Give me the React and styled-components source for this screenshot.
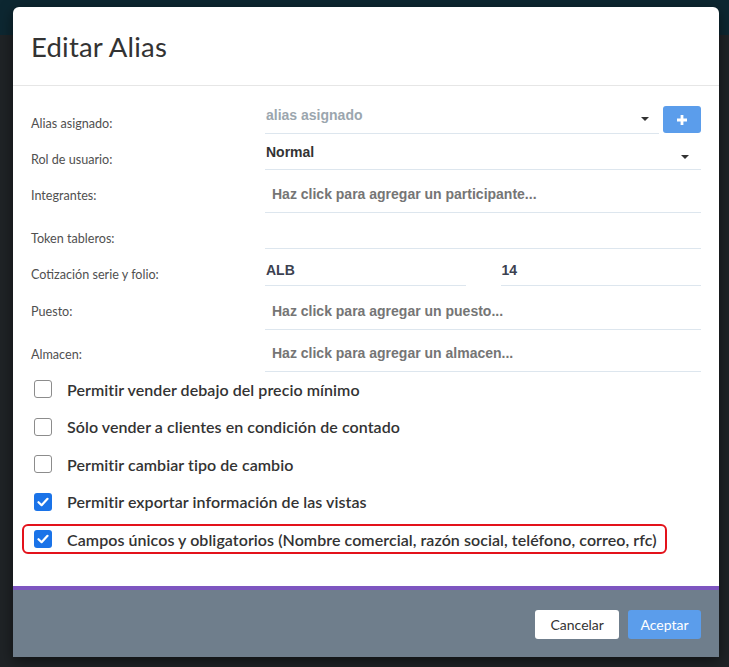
import React from "react";
import styled, { createGlobalStyle } from "styled-components";

const GlobalStyle = createGlobalStyle`
  html, body {
    margin: 0;
    padding: 0;
  }
  body {
    background: #1f2326;
  }
`;

const Page = styled.div`
  min-height: 667px;
  padding: 7px 0 0 13px;
  box-sizing: border-box;
  background: linear-gradient(#0d2731 0, #0d2731 35px, #1f2326 35px);
`;

const Modal = styled.div`
  width: 706px;
  background: #fff;
  border-radius: 6px 6px 0 0;
  box-shadow: 0 4px 14px rgba(0, 0, 0, 0.5);
  overflow: hidden;
`;

const Header = styled.div`
  height: 78px;
  display: flex;
  align-items: center;
  padding-left: 18px;
  border-bottom: 1px solid #e6e6e6;
`;

const Title = styled.h1`
  margin: 0;
  font-family: Lato, "Noto Sans", sans-serif;
  font-weight: 400;
  font-size: 27.5px;
  color: #333;
  letter-spacing: 0.2px;
`;

const Body = styled.div`
  padding: 20px 18px 32px 18px;
`;

const Row = styled.div`
  display: grid;
  grid-template-columns: 234px 1fr;
  align-items: end;
  height: ${(p) => p.$h}px;
`;

const Label = styled.div`
  font-family: Lato, "Noto Sans", sans-serif;
  font-size: 12.6px;
  line-height: 16px;
  color: #505050;
  margin-bottom: ${(p) => p.$lb}px;
`;

const FieldLine = styled.div`
  display: flex;
  align-items: flex-end;
  gap: ${(p) => p.$gap || 0}px;
  height: 100%;
`;

const Field = styled.div`
  flex: 1;
  position: relative;
  height: 100%;
  box-sizing: border-box;
  display: flex;
  align-items: flex-end;
  padding: 0 0 ${(p) => p.$pb || 10}px ${(p) => (p.$inset ? 7 : 1)}px;
  border-bottom: 1px solid #dde6ee;
  font-family: "Liberation Sans", Arial, sans-serif;
  font-weight: 700;
  font-size: 14px;
  line-height: 16px;
  color: ${(p) => p.$color || "#333"};
`;

const SelectValue = styled.span`
  position: absolute;
  top: ${(p) => p.$top}px;
  left: 1px;
`;

const Caret = styled.span`
  position: absolute;
  right: ${(p) => p.$right}px;
  top: ${(p) => p.$top}px;
  width: 0;
  height: 0;
  border-left: 4px solid transparent;
  border-right: 4px solid transparent;
  border-top: 4px solid #333;
`;

const AddButton = styled.button`
  width: 38px;
  height: 27px;
  margin: 0 0 1px 4px;
  align-self: flex-start;
  border: none;
  border-radius: 3px;
  background: #5b9deb;
  display: flex;
  align-items: center;
  justify-content: center;
  padding: 0;
`;

const Checks = styled.div`
  margin: 2px 0 0 -9px;
  display: flex;
  flex-direction: column;
  gap: 7.5px;
`;

const CheckRow = styled.label`
  display: flex;
  align-items: center;
  gap: 15px;
  height: 30px;
  box-sizing: border-box;
  width: fit-content;
  padding: 0 8px 0 10px;
  border: 2px solid ${(p) => (p.$marked ? "#e3121b" : "transparent")};
  border-radius: 6px;
  font-family: Lato, "Noto Sans", sans-serif;
  font-weight: 600;
  font-size: 16px;
  letter-spacing: 0.06px;
  color: #333;
`;

const Box = styled.span`
  width: 18px;
  height: 18px;
  box-sizing: border-box;
  border-radius: 3px;
  border: ${(p) => (p.$on ? "none" : "1.5px solid #8c8c8c")};
  background: ${(p) => (p.$on ? "#1a73e8" : "#fff")};
  display: flex;
  align-items: center;
  justify-content: center;
  flex-shrink: 0;
`;

const Footer = styled.div`
  border-top: 4px solid #7d55c0;
  background: #6f7e8c;
  height: 67px;
  display: flex;
  justify-content: flex-end;
  align-items: flex-start;
  gap: 9px;
  padding: 0 18px;
`;

const Button = styled.button`
  margin-top: 20px;
  height: 29px;
  padding: 0 ${(p) => p.$px}px;
  border: none;
  border-radius: 3px;
  font-family: Lato, "Noto Sans", sans-serif;
  font-size: 14px;
  background: ${(p) => (p.$primary ? "#5b9deb" : "#fff")};
  color: ${(p) => (p.$primary ? "#fff" : "#333")};
`;

const CheckMark = () => (
  <svg width="12" height="10" viewBox="0 0 12 10">
    <path d="M1.5 5.2 L4.6 8.2 L10.5 1.8" fill="none" stroke="#fff" strokeWidth="2.2" strokeLinecap="round" strokeLinejoin="round" />
  </svg>
);

const checks = [
  { text: "Permitir vender debajo del precio mínimo", on: false },
  { text: "Sólo vender a clientes en condición de contado", on: false },
  { text: "Permitir cambiar tipo de cambio", on: false },
  { text: "Permitir exportar información de las vistas", on: true },
  {
    text: "Campos únicos y obligatorios (Nombre comercial, razón social, teléfono, correo, rfc)",
    on: true,
    marked: true,
  },
];

export default function App() {
  return (
    <>
      <GlobalStyle />
      <Page>
        <Modal>
          <Header>
            <Title>Editar Alias</Title>
          </Header>
          <Body>
            <Row $h={28}>
              <Label $lb={2}>Alias asignado:</Label>
              <FieldLine>
                <Field $color="#9ba6ae">
                  <SelectValue $top={1}>alias asignado</SelectValue>
                  <Caret $right={10} $top={11} />
                </Field>
                <AddButton>
                  <svg width="12" height="12" viewBox="0 0 12 12">
                    <path d="M6 1 V11 M1 6 H11" stroke="#fff" strokeWidth="2.8" />
                  </svg>
                </AddButton>
              </FieldLine>
            </Row>
            <Row $h={36}>
              <Label $lb={2}>Rol de usuario:</Label>
              <FieldLine>
                <Field>
                  <SelectValue $top={10}>Normal</SelectValue>
                  <Caret $right={12} $top={21} />
                </Field>
              </FieldLine>
            </Row>
            <Row $h={43}>
              <Label $lb={9}>Integrantes:</Label>
              <FieldLine>
                <Field $inset $color="#757575">Haz click para agregar un participante...</Field>
              </FieldLine>
            </Row>
            <Row $h={36}>
              <Label $lb={2}>Token tableros:</Label>
              <FieldLine>
                <Field />
              </FieldLine>
            </Row>
            <Row $h={37}>
              <Label $lb={3}>Cotización serie y folio:</Label>
              <FieldLine $gap={35}>
                <Field $pb={7} $color="#3c4150">ALB</Field>
                <Field $pb={7} $color="#3c4150">14</Field>
              </FieldLine>
            </Row>
            <Row $h={44}>
              <Label $lb={10}>Puesto:</Label>
              <FieldLine>
                <Field $inset $color="#757575">Haz click para agregar un puesto...</Field>
              </FieldLine>
            </Row>
            <Row $h={42}>
              <Label $lb={9}>Almacen:</Label>
              <FieldLine>
                <Field $inset $color="#757575">Haz click para agregar un almacen...</Field>
              </FieldLine>
            </Row>
            <Checks>
              {checks.map((c) => (
                <CheckRow key={c.text} $marked={c.marked}>
                  <Box $on={c.on}>{c.on && <CheckMark />}</Box>
                  {c.text}
                </CheckRow>
              ))}
            </Checks>
          </Body>
          <Footer>
            <Button $px={15}>Cancelar</Button>
            <Button $px={12.5} $primary>
              Aceptar
            </Button>
          </Footer>
        </Modal>
      </Page>
    </>
  );
}
